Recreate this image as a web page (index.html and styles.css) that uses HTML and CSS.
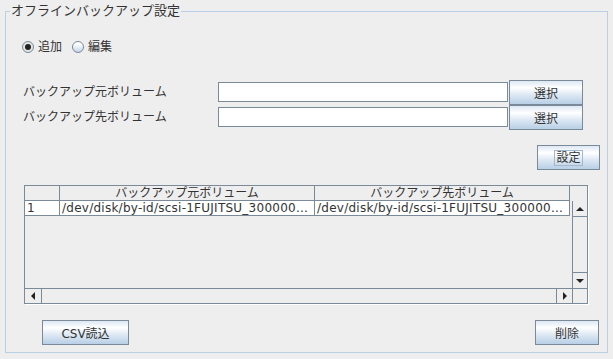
FILE: index.html
```html
<!DOCTYPE html>
<html lang="ja">
<head>
    <meta charset="UTF-8">
    <title>オフラインバックアップ設定</title>
    <link rel="stylesheet" href="styles.css">
</head>
<body>
    <fieldset class="panel">
        <legend class="panel-title">オフラインバックアップ設定</legend>

        <div class="mode-row">
            <label class="radio-item"><span class="radio checked"></span>追加</label>
            <label class="radio-item"><span class="radio"></span>編集</label>
        </div>

        <div class="volume-form">
            <span class="field-label">バックアップ元ボリューム</span>
            <input type="text" class="text-field">
            <button class="btn btn-select">選択</button>

            <span class="field-label">バックアップ先ボリューム</span>
            <input type="text" class="text-field">
            <button class="btn btn-select">選択</button>
        </div>

        <div class="set-row">
            <button class="btn btn-set"><span class="focus-ring">設定</span></button>
        </div>

        <div class="table-pane">
            <div class="table-head">
                <div class="head-cell col-num"></div>
                <div class="head-cell col-vol">バックアップ元ボリューム</div>
                <div class="head-cell col-vol">バックアップ先ボリューム</div>
            </div>
            <div class="head-corner"></div>

            <div class="viewport">
                <div class="table-row">
                    <div class="cell col-num">1</div>
                    <div class="cell col-vol">/dev/disk/by-id/scsi-1FUJITSU_300000...</div>
                    <div class="cell col-vol">/dev/disk/by-id/scsi-1FUJITSU_300000...</div>
                </div>
            </div>
            <div class="vbar">
                <div class="sb-btn sb-up"><span class="arrow arrow-up"></span></div>
                <div class="sb-track"></div>
                <div class="sb-btn sb-down"><span class="arrow arrow-down"></span></div>
            </div>

            <div class="hbar">
                <div class="sb-btn sb-left"><span class="arrow arrow-left"></span></div>
                <div class="sb-track"></div>
                <div class="sb-btn sb-right"><span class="arrow arrow-right"></span></div>
            </div>
            <div class="foot-corner"></div>
        </div>

        <div class="bottom-row">
            <button class="btn btn-csv">CSV読込</button>
            <button class="btn btn-delete">削除</button>
        </div>
    </fieldset>
</body>
</html>
```

FILE: styles.css
```css
body {
    margin: 0;
    background-color: #eeeeee;
    font-family: "DejaVu Sans", "Noto Sans CJK JP", sans-serif;
    font-size: 12px;
    color: #333333;
}
.panel {
    margin: 3px 0 0 5px;
    width: 603px;
    box-sizing: border-box;
    border: 1px solid #b8cfe5;
    padding: 0 0 7px 0;
}
.panel-title {
    margin-left: 4px;
    padding: 0 1px;
    font-size: 13px;
    line-height: 16px;
    color: #333333;
}

/* ラジオボタン */
.mode-row {
    display: flex;
    align-items: center;
    height: 16px;
    margin: 20px 0 0 16px;
}
.radio-item {
    display: flex;
    align-items: center;
    gap: 4px;
    margin-right: 10px;
    line-height: 16px;
}
.radio {
    position: relative;
    width: 12px;
    height: 12px;
    box-sizing: border-box;
    border-radius: 50%;
    border: 1px solid #7a8a99;
    background: linear-gradient(#ffffff 20%, #c4d6e8);
}
.radio.checked {
    background: #e4e4e4;
}
.radio.checked::after {
    content: "";
    position: absolute;
    left: 2px;
    top: 2px;
    width: 6px;
    height: 6px;
    border-radius: 50%;
    background: #222222;
}

/* 入力フォーム */
.volume-form {
    display: grid;
    grid-template-columns: 194px 290px 74px;
    grid-auto-rows: 25px;
    column-gap: 1px;
    margin: 25px 0 0 17px;
    align-items: start;
}
.field-label {
    line-height: 25px;
}
.text-field {
    height: 20px;
    margin: 2px 0 0 0;
    padding: 0 3px;
    box-sizing: border-box;
    border: 1px solid #7a8a99;
    background: #ffffff;
    font: inherit;
    outline: none;
}
.btn {
    height: 25px;
    box-sizing: border-box;
    border: 1px solid #7a8a99;
    background: linear-gradient(#dde8f3 0%, #ffffff 30%, #dde8f3 60%, #b8cfe5 100%);
    font: inherit;
    color: #333333;
    padding: 0;
    cursor: pointer;
}
.btn-select {
    width: 74px;
}
.set-row {
    display: flex;
    justify-content: flex-end;
    margin-top: 15px;
    padding-right: 7px;
}
.btn-set {
    width: 63px;
}
.focus-ring {
    display: inline-block;
    border: 1px solid #a3b8cc;
    padding: 0 1px;
    line-height: 14px;
}

/* テーブル */
.table-pane {
    display: grid;
    grid-template-columns: 547px 15px;
    grid-template-rows: 15px 87px 15px;
    width: 564px;
    height: 119px;
    box-sizing: border-box;
    margin: 15px 0 0 18px;
    border: 1px solid #7a8a99;
    box-shadow: 1px 1px 0 #ffffff;
}
.table-head, .table-row {
    display: flex;
}
.head-cell, .cell {
    height: 15px;
    box-sizing: border-box;
    border-right: 1px solid #7a8a99;
    border-bottom: 1px solid #7a8a99;
    line-height: 14px;
    white-space: nowrap;
    overflow: hidden;
}
.head-cell {
    text-align: center;
}
.cell {
    background: #ffffff;
    padding-left: 2px;
    letter-spacing: 0.25px;
}
.col-num {
    width: 35px;
}
.col-vol {
    width: 255px;
}
.viewport {
    background: #eeeeee;
}
.vbar {
    display: flex;
    flex-direction: column;
    border-left: 1px solid #7a8a99;
}
.hbar {
    display: flex;
    border-top: 1px solid #7a8a99;
}
.sb-track {
    flex: 1;
}
.sb-btn {
    display: flex;
    align-items: center;
    justify-content: center;
    box-sizing: border-box;
}
.sb-up {
    height: 16px;
    border-bottom: 1px solid #7a8a99;
}
.sb-down {
    height: 16px;
    border-top: 1px solid #7a8a99;
}
.sb-left {
    width: 17px;
    border-right: 1px solid #7a8a99;
}
.sb-right {
    width: 16px;
    border-left: 1px solid #7a8a99;
}
.foot-corner {
    border-top: 1px solid #7a8a99;
    border-left: 1px solid #7a8a99;
}
.arrow {
    width: 0;
    height: 0;
}
.arrow-up {
    border-left: 4px solid transparent;
    border-right: 4px solid transparent;
    border-bottom: 4px solid #222222;
}
.arrow-down {
    border-left: 4px solid transparent;
    border-right: 4px solid transparent;
    border-top: 4px solid #222222;
}
.arrow-left {
    border-top: 4px solid transparent;
    border-bottom: 4px solid transparent;
    border-right: 4px solid #222222;
}
.arrow-right {
    border-top: 4px solid transparent;
    border-bottom: 4px solid transparent;
    border-left: 4px solid #222222;
}

/* 下部ボタン */
.bottom-row {
    display: flex;
    justify-content: space-between;
    margin-top: 16px;
    padding: 0 8px 0 36px;
}
.btn-csv {
    width: 87px;
}
.btn-delete {
    width: 64px;
}
```
